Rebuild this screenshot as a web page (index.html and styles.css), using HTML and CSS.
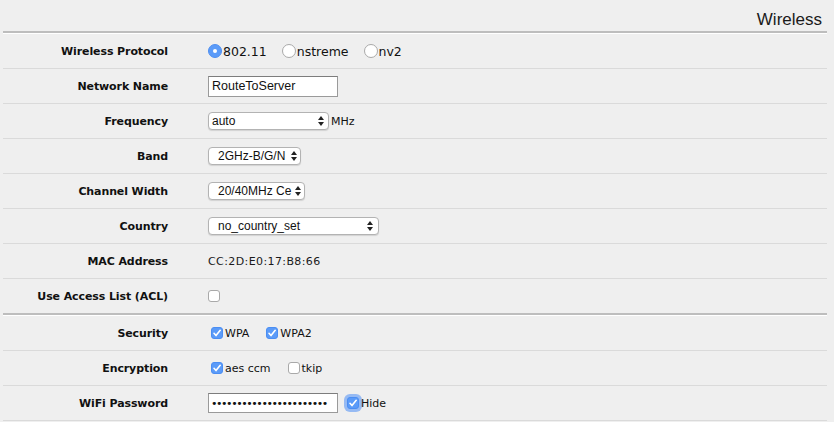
FILE: index.html
```html
<!DOCTYPE html>
<html>
<head>
<meta charset="utf-8">
<title>Wireless</title>
<link rel="stylesheet" href="styles.css">
</head>
<body>
<div class="panel">
  <div class="title">Wireless</div>

  <div class="section">
    <div class="row">
      <div class="label">Wireless Protocol</div>
      <div class="value">
        <label class="opt"><span class="radio on"></span>802.11</label>
        <label class="opt"><span class="radio"></span>nstreme</label>
        <label class="opt"><span class="radio"></span>nv2</label>
      </div>
    </div>
    <div class="row">
      <div class="label">Network Name</div>
      <div class="value"><input class="field" type="text" value="RouteToServer"></div>
    </div>
    <div class="row">
      <div class="label">Frequency</div>
      <div class="value">
        <div class="select sel-freq"><span class="sel-text">auto</span><svg class="arrows" width="6" height="10" viewBox="0 0 6 10"><polygon points="0,4 3,0 6,4"/><polygon points="0,6 3,10 6,6"/></svg></div>
        <span class="unit">MHz</span>
      </div>
    </div>
    <div class="row">
      <div class="label">Band</div>
      <div class="value">
        <div class="select sel-band"><span class="sel-text">2GHz-B/G/N</span><svg class="arrows" width="6" height="10" viewBox="0 0 6 10"><polygon points="0,4 3,0 6,4"/><polygon points="0,6 3,10 6,6"/></svg></div>
      </div>
    </div>
    <div class="row">
      <div class="label">Channel Width</div>
      <div class="value">
        <div class="select sel-chan"><span class="sel-text">20/40MHz Ce</span><svg class="arrows" width="6" height="10" viewBox="0 0 6 10"><polygon points="0,4 3,0 6,4"/><polygon points="0,6 3,10 6,6"/></svg></div>
      </div>
    </div>
    <div class="row">
      <div class="label">Country</div>
      <div class="value">
        <div class="select sel-country"><span class="sel-text">no_country_set</span><svg class="arrows" width="6" height="10" viewBox="0 0 6 10"><polygon points="0,4 3,0 6,4"/><polygon points="0,6 3,10 6,6"/></svg></div>
      </div>
    </div>
    <div class="row">
      <div class="label">MAC Address</div>
      <div class="value text">CC:2D:E0:17:B8:66</div>
    </div>
    <div class="row row-end">
      <div class="label">Use Access List (ACL)</div>
      <div class="value"><span class="check"></span></div>
    </div>
  </div>

  <div class="section">
    <div class="row">
      <div class="label">Security</div>
      <div class="value">
        <label class="copt"><span class="check on"><svg width="12" height="12" viewBox="0 0 12 12"><path d="M3 6.3 L5 8.6 L9.2 3.3"/></svg></span>WPA</label>
        <label class="copt"><span class="check on"><svg width="12" height="12" viewBox="0 0 12 12"><path d="M3 6.3 L5 8.6 L9.2 3.3"/></svg></span>WPA2</label>
      </div>
    </div>
    <div class="row">
      <div class="label">Encryption</div>
      <div class="value">
        <label class="copt"><span class="check on"><svg width="12" height="12" viewBox="0 0 12 12"><path d="M3 6.3 L5 8.6 L9.2 3.3"/></svg></span>aes ccm</label>
        <label class="copt"><span class="check"></span>tkip</label>
      </div>
    </div>
    <div class="row">
      <div class="label">WiFi Password</div>
      <div class="value">
        <div class="field pass">•••••••••••••••••••••••</div>
        <label class="copt hide"><span class="check on focus"><svg width="12" height="12" viewBox="0 0 12 12"><path d="M3 6.3 L5 8.6 L9.2 3.3"/></svg></span>Hide</label>
      </div>
    </div>
  </div>
</div>
</body>
</html>
```

FILE: styles.css
```css
html, body {
  margin: 0;
  background: #efefef;
}
body {
  font-family: "DejaVu Sans", Verdana, sans-serif;
  color: #111;
  overflow: hidden;
}
.panel {
  margin: 0 7px 0 3px;
}
.title {
  height: 33px;
  box-sizing: border-box;
  padding: 10px 5px 0 0;
  line-height: 20px;
  text-align: right;
  font-family: "Liberation Sans", Arial, sans-serif;
  font-size: 17px;
  color: #1a1a1a;
  border-bottom: 2px solid #bdbdbd;
}
.section {
  border-top: 1px solid #ffffff;
}
.row {
  display: grid;
  grid-template-columns: 165px 1fr;
  column-gap: 40px;
  align-items: center;
  height: 35px;
  box-sizing: border-box;
  border-bottom: 1px solid #dadada;
}
.row-end {
  height: 36px;
  border-bottom: 2px solid #bdbdbd;
}
.label {
  text-align: right;
  font-weight: bold;
  font-size: 11px;
  letter-spacing: -0.1px;
  color: #111;
  white-space: nowrap;
}
.value {
  display: flex;
  align-items: center;
  font-size: 11px;
  white-space: nowrap;
}
.value.text {
  font-size: 11px;
  letter-spacing: 0.4px;
  color: #1a1a1a;
}

/* radios */
.opt {
  display: flex;
  align-items: center;
  font-size: 12.5px;
  color: #111;
  margin-right: 15px;
}
.radio {
  width: 12px;
  height: 12px;
  border-radius: 50%;
  border: 1px solid #a9a9a9;
  background: #fff;
  margin-right: 1px;
  box-sizing: content-box;
  display: flex;
  align-items: center;
  justify-content: center;
}
.radio.on {
  border-color: #4f8ff0;
  background: #5b9bf8;
}
.radio.on::after {
  content: "";
  width: 4px;
  height: 4px;
  border-radius: 50%;
  background: #fff;
}

/* text fields */
.field {
  width: 130px;
  height: 21px;
  box-sizing: border-box;
  margin: 0;
  padding: 0 3px;
  border: 1px solid #9a9a9a;
  border-top-color: #7d7d7d;
  background: #fff;
  font-family: "Liberation Sans", Arial, sans-serif;
  font-size: 12.5px;
  color: #111;
  outline: none;
  border-radius: 0;
}
.pass {
  display: flex;
  align-items: center;
  height: 20px;
  font-family: "DejaVu Sans", sans-serif;
  font-size: 11px;
  letter-spacing: -1.45px;
  padding-left: 2px;
  overflow: hidden;
}

/* selects */
.select {
  height: 18px;
  box-sizing: border-box;
  display: flex;
  align-items: center;
  background: #fff;
  border: 1px solid #b3b3b3;
  border-radius: 4px;
  box-shadow: 0 1px 1px rgba(0, 0, 0, 0.12);
  font-family: "Liberation Sans", Arial, sans-serif;
  font-size: 12px;
  color: #111;
  overflow: hidden;
}
.sel-text {
  white-space: nowrap;
}
.arrows {
  flex: none;
  margin-left: auto;
  fill: #222;
}
.sel-freq { width: 121px; padding: 0 4px 0 3px; }
.sel-band { width: 93px; padding: 0 3px 0 9px; }
.sel-chan { width: 97px; padding: 0 3px 0 9px; }
.sel-country { width: 171px; padding: 0 5px 0 9px; }
.unit {
  margin-left: 2px;
  font-size: 11px;
  color: #111;
}

/* checkboxes */
.check {
  width: 10px;
  height: 10px;
  border: 1px solid #a9a9a9;
  border-radius: 3px;
  background: #fff;
  box-sizing: content-box;
  display: inline-flex;
  align-items: center;
  justify-content: center;
  flex: none;
}
.check.on {
  border-color: #4b8ef3;
  background: #5b9bf8;
}
.check svg {
  flex: none;
  fill: none;
  stroke: #fff;
  stroke-width: 1.6;
  stroke-linecap: round;
  stroke-linejoin: round;
}
.check.focus {
  box-shadow: 0 0 0 3px rgba(90, 150, 245, 0.6);
}
.copt {
  display: flex;
  align-items: center;
  font-size: 11px;
  color: #111;
  margin-right: 14px;
}
.copt .check {
  margin: 0 2px 0 3px;
}
.copt.hide {
  margin-left: 6px;
}
```
